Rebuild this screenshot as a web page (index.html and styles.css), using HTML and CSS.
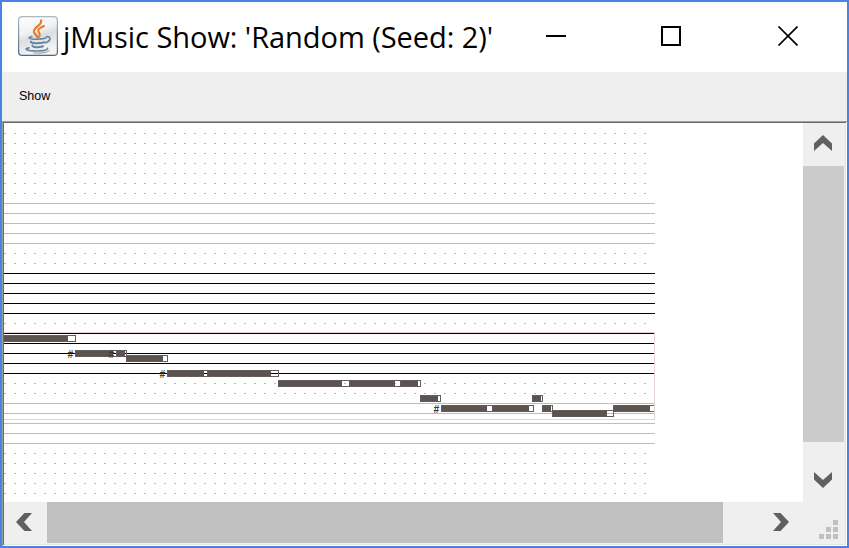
FILE: index.html
```html
<!DOCTYPE html>
<html lang="en">
<head>
<meta charset="utf-8">
<title>jMusic Show</title>
<link rel="stylesheet" href="styles.css">
</head>
<body>
<div class="window">
  <header class="titlebar">
    <svg class="logo" viewBox="0 0 40 40">
      <defs>
        <linearGradient id="tile" x1="0" y1="0" x2="0.3" y2="1"><stop offset="0" stop-color="#fff"/><stop offset="0.45" stop-color="#f1f1f1"/><stop offset="0.6" stop-color="#dedede"/><stop offset="1" stop-color="#f4f4f4"/></linearGradient>
        <linearGradient id="rim" x1="0" y1="0" x2="0" y2="1"><stop offset="0" stop-color="#a9bac6"/><stop offset="1" stop-color="#4b6980"/></linearGradient>
      </defs>
      <rect x="0.6" y="0.6" width="38.8" height="38.8" rx="3.5" fill="url(#tile)" stroke="url(#rim)" stroke-width="1.2"/>
      <g fill="none" stroke="#e8792b" stroke-linecap="round">
        <path d="M23 4.5C25 9 15 11 16 16C16.5 18 19 19.500 19.500 21.500" stroke-width="2.200"/>
        <path d="M26 10C21 12 19 14 21 16.500C22.500 18.500 22 19.500 21 21" stroke-width="1.900"/>
      </g>
      <g fill="none" stroke="#6686a2" stroke-linecap="round">
        <path d="M14 20.500C10 21.300 10 22.500 14 22.900C19 23.400 25 22.900 28 22" stroke-width="1.500"/>
        <path d="M28.500 20.700C33.500 20 33 25 27.500 26.700" stroke-width="1.700"/>
        <path d="M13 25.500C11.500 27.500 21 27.800 26.500 26.300" stroke-width="2"/>
        <path d="M14.500 29.500C14 31.500 20.500 31.800 25 30.300" stroke-width="2"/>
        <path d="M11 31.800C5.500 33 8.500 34.500 15 34.900C22 35.300 30 34.500 29.500 32.300" stroke-width="1.700"/>
        <path d="M16 37C23 37.500 30 36.500 31.500 34.500" stroke-width="0.800"/>
      </g>
    </svg>
    <h1 class="title">jMusic Show: 'Random (Seed: 2)'</h1>
    <svg class="controls" viewBox="0 0 252 20">
      <path d="M0 9h20v2H0z"/>
      <path d="M116 1h18v18h-18z" fill="none" stroke="#000" stroke-width="2"/>
      <path d="M232.500 0.500L251.500 19.500M251.500 0.500L232.500 19.500" stroke="#000" stroke-width="1.700"/>
    </svg>
  </header>
  <nav class="menubar"><span class="menu">Show</span></nav>
  <main class="pane">
    <svg class="score" viewBox="4 123 799 379" shape-rendering="crispEdges">
      <path class="dots" d="M4 133.500h642M4 143.500h642M4 153.500h642M4 163.500h642M4 173.500h642M4 183.500h642M4 193.500h642M4 253.500h642M4 263.500h642M4 323.500h642M4 383.500h642M4 393.500h642M4 453.500h642M4 463.500h642M4 473.500h642M4 483.500h642M4 493.500h642"/>
      <path class="ledger" d="M4 203.500h651M4 213.500h651M4 223.500h651M4 233.500h651M4 243.500h651M4 403.500h651M4 413.500h651M4 423.500h651M4 433.500h651M4 443.500h651"/>
      <path class="staff" d="M4 273.500h651M4 283.500h651M4 293.500h651M4 303.500h651M4 313.500h651M4 333.500h651M4 343.500h651M4 353.500h651M4 363.500h651M4 373.500h651"/>
      <path class="phrase" d="M4 332.500h650.500v87H4"/>
      <g class="outlines">
        <path d="M3.500 335.500h72v6h-72zM75.500 350.500h41v6h-41zM116.500 350.500h10v6h-10zM126.500 355.500h41v6h-41zM167.500 370.500h40v6h-40zM207.500 370.500h71v6h-71zM278.500 380.500h71v6h-71zM349.500 380.500h51v6h-51zM400.500 380.500h20v6h-20zM420.500 395.500h20v6h-20zM441.500 405.500h51v6h-51zM492.500 405.500h41v6h-41zM532.500 395.500h10v6h-10zM542.500 405.500h10v6h-10zM552.500 410.500h61v6h-61zM654 405.500h-40.500v6h40.500"/>
      </g>
      <path class="fills" d="M4 336h64v5H4zM76 351h37v5H76zM117 351h8v5h-8zM127 356h36v5h-36zM168 371h36v5h-36zM208 371h63v5h-63zM279 381h63v5h-63zM350 381h45v5h-45zM401 381h17v5h-17zM421 396h17v5h-17zM442 406h45v5h-45zM493 406h36v5h-36zM533 396h8v5h-8zM543 406h8v5h-8zM553 411h54v5h-54zM614 406h36v5h-36z"/>
      <g class="sharp"><text x="67.500" y="358">#</text><text x="108.500" y="358">#</text><text x="159.500" y="378">#</text><text x="433.500" y="413">#</text></g>
    </svg>
    <div class="vscroll">
      <svg class="arrow-v" viewBox="0 0 18 16"><path d="M9 0L18 8.500V16L9 8L0 16V8.500z"/></svg>
      <div class="thumb-v"></div>
      <svg class="arrow-v low" viewBox="0 0 18 16"><path d="M9 16L18 7.500V0L9 8L0 0V7.500z"/></svg>
    </div>
    <div class="hscroll">
      <svg class="arrow-h" viewBox="0 0 16 18"><path d="M0 9L8.500 0H16L8 9L16 18H8.500z"/></svg>
      <div class="thumb-h"></div>
      <svg class="arrow-h right" viewBox="0 0 16 18"><path d="M16 9L7.500 0H0L8 9L0 18H7.500z"/></svg>
      <svg class="grip" viewBox="0 0 19 19"><path d="M14 0h5v5h-5zM7 7h5v5H7zM14 7h5v5h-5zM0 14h5v5H0zM7 14h5v5H7zM14 14h5v5h-5z"/></svg>
    </div>
  </main>
</div>
</body>
</html>
```
FILE: styles.css
```css
* { box-sizing: border-box; }
body { margin: 0; overflow: hidden; }
svg { display: block; flex: none; }
.window {
  width: 849px; height: 548px;
  border: 2px solid #4a83e0;
  background: #fff;
  display: flex; flex-direction: column;
}
.titlebar { height: 70px; flex: none; display: flex; padding-left: 16px; }
.logo { width: 40px; height: 40px; margin-top: 14px; }
.title {
  margin: 13px 0 0 5px; width: 483px; height: 44px;
  font: 400 29px/44px "Open Sans", "Noto Sans", sans-serif;
  letter-spacing: -0.05px; white-space: nowrap; color: #000;
}
.controls { width: 252px; height: 20px; margin-top: 24px; }
.menubar {
  height: 49px; flex: none; padding: 16px 17px; background: #efefef;
  font: 12.5px/16px "Liberation Sans", sans-serif; color: #000;
}
.menu { display: block; }
.pane {
  width: 845px; height: 425px; flex: none;
  padding: 2px;
  box-shadow: inset 1px 1px #a0a0a0, inset -1px -1px #fff, inset 2px 2px #696969, inset -2px -2px #e3e3e3;
  display: grid; grid-template-columns: 799px 42px; grid-template-rows: 379px 42px;
}
.score { width: 799px; height: 379px; }
.dots { stroke: #b8b8b8; stroke-dasharray: 2 8; }
.ledger { stroke: #bdbdbd; }
.staff { stroke: #000; }
.phrase { stroke: #e5d5d3; fill: none; }
.outlines { stroke: #645b5b; fill: none; }
.fills { fill: #5b5350; }
.sharp { font: italic bold 10px "Liberation Sans", sans-serif; fill: #3e3735; }
.vscroll { background: #efefef; display: flex; flex-direction: column; }
.arrow-v { width: 18px; height: 16px; margin: 12px 0 15px 11px; fill: #606060; }
.thumb-v { width: 41px; height: 276px; flex: none; background: #cbcbcb; }
.low { margin: 30px 0 0 11px; }
.hscroll { grid-column: 1 / 3; background: #efefef; display: flex; }
.arrow-h { width: 16px; height: 18px; margin: 11px 15px 0 12px; fill: #606060; }
.thumb-h { width: 676px; height: 41px; background: #c0c0c0; }
.right { margin: 11px 30px 0 50px; }
.grip { width: 19px; height: 19px; margin-top: 18px; fill: #c0c0c0; }
```
